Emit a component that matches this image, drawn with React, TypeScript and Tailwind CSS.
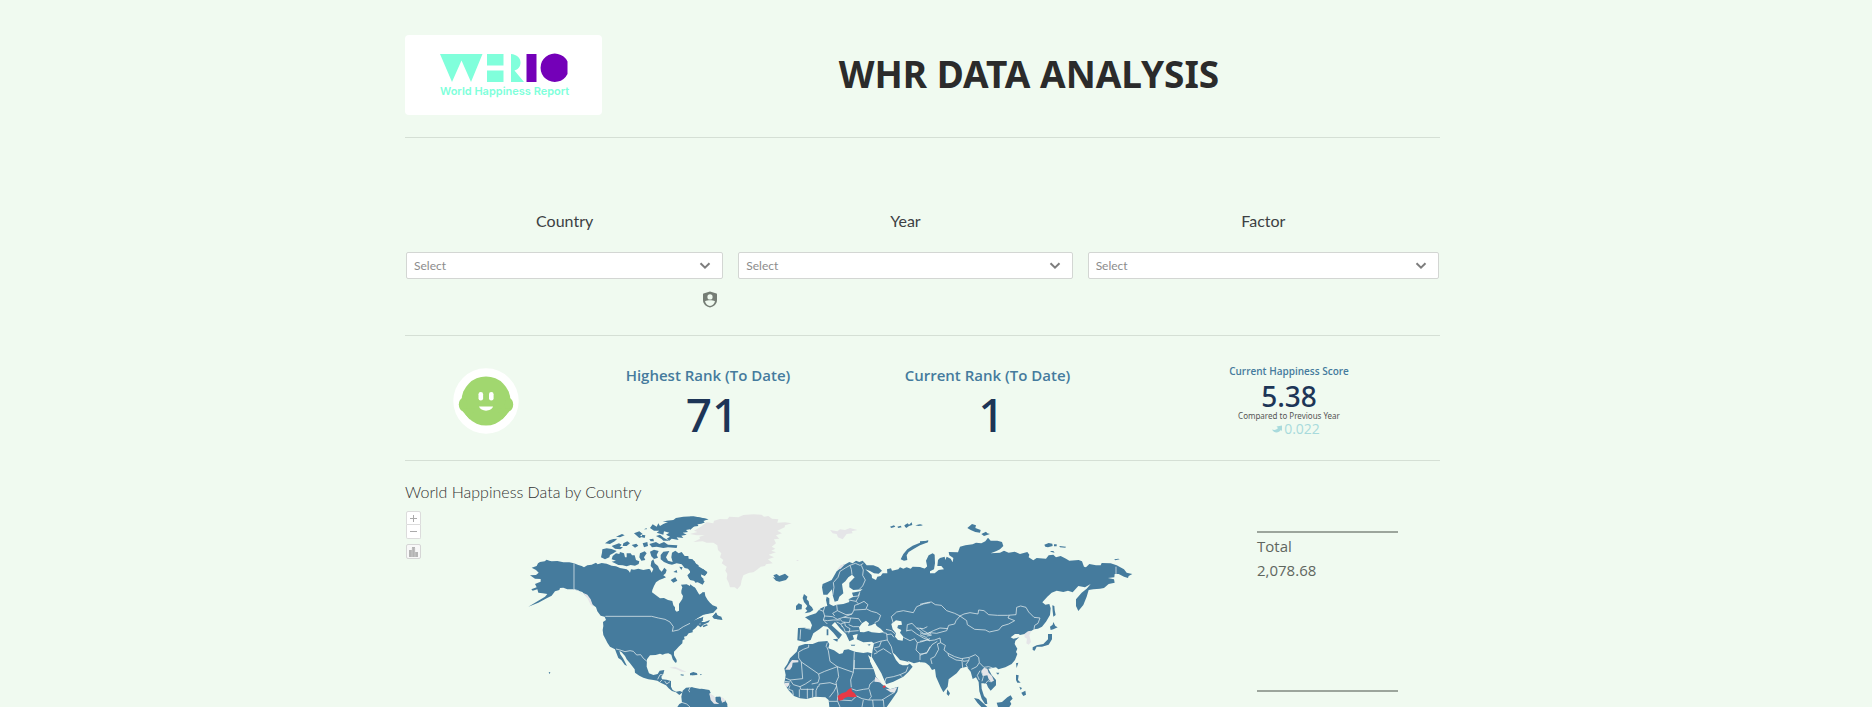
import React from "react";

const NORTH_AMERICA = [
  "M110,179 L118,182 125,184 142,183 160,187 178,187 192,190 205,195 215,198 222,202 232,196 245,194 258,188 263,193 275,189 290,191 305,197 318,199 330,204 350,208 356,212 360,218 363,208 372,209 385,206 400,210 415,207 420,208 425,218 430,207 422,198 424,184 430,178 434,190 444,198 448,208 455,215 463,203 470,210 467,220 460,226 468,232 458,236 448,240 438,247 432,258 427,270 426,277 440,287 450,295 462,294 474,300 487,303 490,316 495,322 495,330 500,335 507,332 507,312 517,297 519,288 514,280 514,272 517,262 513,254 530,253 540,258 545,263 553,262 558,270 560,278 568,284 575,288 576,278 584,276 586,288 593,300 600,308 608,316 620,320 622,325 612,334 600,338 590,341 575,344 565,350 552,362 565,357 580,350 578,360 571,366 584,366 600,360 596,367 580,374 572,382 564,376 556,385 548,391 548,397 536,400 530,408 522,410 524,418 518,420 517,430 506,440 500,447 492,455 492,466 500,480 500,487 496,488 488,478 484,464 475,460 465,461 458,464 450,461 437,465 420,466 411,478 410,500 417,520 430,525 443,522 449,512 463,510 460,522 454,530 456,538 470,539 483,543 483,560 488,570 498,575 510,573 518,577 508,585 498,577 486,573 476,565 468,556 452,548 442,542 430,540 415,538 400,533 388,527 375,518 374,508 360,490 350,478 345,468 335,457 328,452 331,463 340,476 351,498 344,494 334,480 325,474 318,456 315,448 300,440 292,428 288,420 280,405 278,390 280,378 279,366 288,360 284,350 272,347 262,334 258,322 245,312 240,298 228,288 217,276 205,272 190,268 172,268 160,263 150,264 148,270 135,274 125,287 110,295 85,308 55,320 80,305 105,290 112,282 98,280 85,278 82,268 68,272 64,268 80,262 75,252 84,248 92,245 92,237 75,236 60,226 78,225 86,218 78,210 65,203 80,198 84,190 90,186 104,184Z",
  "M277,148 L290,145 305,147 320,153 310,160 300,165 298,172 285,178 273,172 276,158Z",
  "M308,168 L318,160 328,162 330,156 342,160 345,172 350,172 350,160 362,160 366,166 374,166 378,180 388,184 386,192 375,197 362,195 350,199 338,196 325,195 312,188 305,185 318,182 305,178Z",
  "M285,130 L298,121 310,117 322,116 314,124 300,132Z M318,110 l18,-8 8,4 -14,6z M305,138 l22,-8 8,4 -6,6 10,2 -8,6 -16,-2z M340,130 l12,-6 8,6 -10,8 -12,0z M365,135 l14,-4 6,6 -10,6z M372,100 l16,-6 10,8 -8,4 8,4 -10,4z M396,104 l10,2 -2,8 -8,-2z M402,88 l8,-4 0,4z M418,118 l12,-2 2,8 -10,0z M398,130 l14,-4 2,12 -12,4z M390,160 l14,-6 6,6 -8,12 4,8 -12,2 -6,-10z M420,155 l12,-6 14,4 -6,12 4,8 -12,4 -8,-8z",
  "M420,84 L428,73 440,80 445,70 450,78 460,72 474,66 458,66 470,62 490,60 498,54 520,50 550,49 575,53 596,58 580,62 584,68 562,72 565,78 545,80 540,88 528,90 534,96 518,98 530,104 514,107 520,114 500,112 506,120 485,116 478,122 470,116 480,110 468,104 478,98 462,94 460,104 440,98 448,92 432,92Z",
  "M438,108 l12,-4 12,10 16,8 -18,0 -6,-6z M418,132 l20,-6 10,6 14,-6 12,8 28,2 -2,8 -26,-2 -14,2 -20,-4 -14,2z",
  "M452,165 L460,155 478,153 472,164 468,172 474,182 488,186 484,172 486,158 496,152 506,160 515,156 524,168 535,168 536,176 548,178 556,190 566,196 564,206 580,208 592,216 586,226 572,218 574,230 582,238 574,242 578,252 565,246 556,248 550,238 538,238 532,226 542,216 534,206 524,204 515,193 500,190 486,194 476,192 462,186 452,178Z",
  "M482,240 l14,-8 6,10 -12,6z M490,216 l10,-6 2,8z M508,200 l10,2 -4,8z M607,350 L618,338 622,346 634,350 637,360 624,358 612,356Z M578,377 l12,-4 4,3 -14,6z",
  "M540,520 L550,516 562,520 558,525 546,526Z M512,523 l10,1 -2,3 -8,-1z M570,522 l6,1 -4,3z M116,516 l5,1 -2,6z",
  "M518,572 L528,563 545,562 560,568 575,566 598,570 602,578 596,584 598,600 608,614 622,612 616,600 618,590 630,590 633,602 645,600 652,612 652,621 502,621 508,612 516,608 514,590Z",
];

const NORTH_AMERICA_FAINT =
  "M478,503 L495,500 512,508 530,516 515,515 500,508Z M596,580 L612,588 616,606 624,610 616,614 604,610 598,598Z M632,592 l10,4 4,8 -10,0z M218,278 l14,6 10,14 8,22 -8,-6 -10,-20z";

const NORTH_AMERICA_BORDERS =
  "M192,190 V268 L205,272 218,284 M286,349 H425 L445,354 465,358 480,366 490,380 487,394 505,390 520,380 540,370 556,360 568,357 570,374 M318,447 L330,450 345,455 360,452 370,454 380,465 392,464 400,475 411,484 M443,538 L450,524 458,524 M456,540 L448,548 M464,543 L470,552 480,545 M540,562 L536,572 545,582 560,586 562,600 556,612 M560,612 L580,612 590,602 600,598 M515,607 L530,612 540,621";

const GREENLAND =
  "M0,102 L22,96 12,92 30,82 50,67 70,70 72,62 90,57 112,58 118,50 145,52 160,45 190,43 215,44 222,50 235,48 246,56 265,58 262,68 285,67 305,70 285,76 284,82 262,92 276,100 258,106 268,116 252,118 258,130 245,140 256,146 244,152 258,157 236,164 252,172 234,178 248,190 228,193 225,198 212,200 200,210 190,217 178,218 160,226 155,240 152,256 142,268 134,262 120,262 116,248 110,236 112,222 106,212 110,200 95,190 100,180 90,172 94,160 84,150 82,136 70,128 50,128 38,124 10,126 30,116 28,110 44,106 20,106Z";

const WEST = [
  "M248,232 L256,234 250,226 260,222 268,228 285,221 296,230 288,240 268,245 258,242Z",
  "M342,282 L352,290 350,298 356,304 358,314 366,322 370,330 360,337 344,340 352,332 346,326 352,318 342,306 338,294Z M318,330 L318,318 326,310 336,314 335,328Z",
  "M396,262 L398,252 412,246 425,240 432,228 440,214 445,210 455,196 466,193 478,186 488,190 498,182 508,186 518,182 525,190 530,196 550,196 565,202 576,212 566,221 552,220 540,213 526,208 545,225 546,234 558,240 562,230 572,228 578,220 592,220 591,208 603,205 606,212 625,208 630,202 640,206 650,202 662,206 668,200 690,201 704,206 715,196 720,170 720,490 690,485 672,490 652,482 668,500 655,516 640,530 610,545 588,553 574,520 545,470 548,450 552,430 545,425 520,427 500,418 503,402 488,406 492,418 478,424 468,402 450,385 435,366 425,376 456,404 446,418 430,398 412,380 400,378 388,388 370,400 362,420 345,426 322,421 324,384 345,383 362,387 366,376 360,362 345,352 360,346 378,340 390,326 402,320 412,318 408,300 410,290 418,295 418,312 430,318 440,314 460,312 478,306 476,298 490,290 486,278 510,274 518,268 490,270 478,262 478,248 494,232 486,224 475,232 466,244 456,252 460,280 448,290 444,302 434,305 428,286 426,268 412,284 400,284Z",
  "M632,178 L640,162 652,148 668,137 690,128 715,121 714,127 690,136 672,146 656,156 650,166 652,180 642,182Z",
  "M345,432 L368,432 385,425 412,423 418,432 415,445 432,451 448,462 458,460 462,450 475,448 495,455 520,459 533,457 545,460 540,484 552,510 558,530 575,552 590,562 600,568 625,560 622,575 605,600 590,621 418,621 416,600 406,592 375,590 350,597 330,595 312,588 295,570 283,550 287,525 283,505 292,492 300,475 320,455 326,438Z",
  "M600,80 l12,-4 4,4 -12,4z M622,80 l10,-3 3,5 -10,2z M643,76 l10,-6 4,4 8,-7 2,8 -10,3 -8,6 -4,-4z M676,76 l14,-3 8,3 -12,2z M410,388 h5 v18 h-5z M428,418 l16,-2 -2,9z M482,434 l14,0 -2,3 -10,0z M532,434 l10,-2 -4,5z",
  "M0,50 L20,51 54,58 36,64 38,70 18,74 0,90Z M0,176 L14,184 20,196 40,208 52,218 44,228 30,222 32,234 44,244 38,254 18,244 0,240Z M0,253 L16,264 28,284 40,276 46,298 66,318 82,325 70,338 40,344 10,362 30,354 40,360 30,370 14,378 0,394Z M67,350 L78,337 83,347 98,358 82,358Z",
  "M0,520 l16,0 8,5 -24,1z M0,570 L5,562 35,568 58,572 60,588 78,600 76,592 92,590 94,602 108,608 112,621 0,621Z",
];

const WEST_WATER =
  "M510,396 L507,382 516,370 528,362 537,370 534,378 544,376 556,370 560,378 572,386 582,397 568,399 545,397 535,393 522,397Z M604,372 L618,361 634,364 636,374 624,376 622,384 634,390 630,398 640,410 638,422 624,420 615,410 618,400 608,388Z M534,465 L546,474 560,500 572,522 586,548 588,556 580,556 572,542 562,528 552,508 543,488Z M606,456 L616,464 630,480 648,484 662,489 652,496 638,496 628,492 618,480Z M454,376 l4,4 -2,2z";

const WEST_FAINT =
  "M420,90 L442,94 450,88 465,90 480,84 502,90 485,94 488,100 470,102 458,118 444,112 440,102 428,100Z M300,488 L306,480 325,481 325,487 308,488 306,500 300,509 286,509 292,500Z M553,545 L556,530 568,540 576,549 564,546Z M586,566 L600,568 622,562 614,578 602,577Z M282,548 h16 v6 l-6,8 -6,-4z M58,580 L74,590 78,605 88,612 72,611 62,600Z M92,590 L100,594 106,604 96,608Z M440,210 l12,-14 14,-4 -14,14z M320,180 h5 v3 h-5z";

const WEST_BORDERS =
  "M428,286 L432,262 430,248 444,232 450,214 466,204 480,196 484,208 486,224 M480,196 L496,190 510,196 520,190 M514,196 L520,210 518,226 526,240 518,258 508,268 M488,290 L505,288 510,275 M476,300 L498,304 506,290 508,280 M498,304 L506,312 522,304 534,314 528,326 544,334 560,338 572,346 566,362 554,368 M506,312 L494,316 M494,316 L492,330 486,342 468,344 442,332 440,314 M492,330 L528,328 M405,318 L400,334 404,348 400,360 412,372 M400,334 L386,328 M404,348 L428,350 442,358 460,352 486,342 M442,332 L428,340 434,348 M460,352 L482,354 478,368 458,366 450,358 M400,360 L412,362 430,360 450,360 M482,354 L506,356 514,368 M476,374 L490,380 508,380 M464,366 L466,378 480,386 476,400 M452,372 L462,386 466,396 480,394 506,392 M440,366 L452,372 464,368 M332,388 L330,418 M344,384 L362,388 M580,398 L590,400 592,420 570,424 552,430 M588,388 L604,392 616,402 M590,404 L604,402 612,412 M592,420 L604,440 608,458 M574,424 L568,440 552,444 M552,446 L562,456 580,446 604,462 M552,462 L562,458 M584,548 L588,534 610,530 630,524 636,530 M630,524 L648,516 654,500 M610,370 L604,350 620,336 640,332 670,338 680,320 700,312 720,308 M640,412 L660,422 674,416 682,428 678,450 690,462 690,480 M650,394 L652,374 666,370 680,384 700,386 712,380 M650,392 L664,390 680,402 700,414 716,420 M682,428 L700,424 720,416 M690,462 L710,460 720,440 M680,384 L700,400 720,404";

const AFRICA_BORDERS =
  "M326,456 L340,448 356,442 356,434 M326,456 V474 L334,486 386,522 404,514 442,500 420,484 415,452 410,440 M412,428 L408,440 M334,486 L338,536 300,540 286,534 M386,522 L388,534 M442,500 L490,517 493,455 M490,506 H552 M493,480 V506 M442,500 L446,530 438,548 440,560 M490,517 L482,540 484,562 M388,534 L384,548 365,552 M440,555 L420,548 388,552 386,560 M300,540 L310,554 330,560 332,568 M284,544 L300,546 M300,556 L296,568 308,572 310,586 M330,560 L346,552 364,540 M328,568 L328,592 M352,566 V596 M332,568 H372 M368,566 V592 M384,558 L378,572 378,590 M440,558 L432,574 418,592 M440,560 L444,582 442,602 450,621 M484,566 L500,572 520,568 536,566 540,552 554,540 M500,588 L516,596 536,600 544,590 538,568 M536,600 L548,600 550,621 M548,600 L580,600 582,621 M576,600 L600,585 612,578 M500,588 L485,602 450,600 M416,604 L442,604 M520,600 L516,621";

const EAST = [
  "M0,205 L14,206 22,202 18,182 26,166 38,160 44,164 45,190 42,208 30,214 26,220 44,220 56,210 72,208 64,198 52,198 54,180 60,174 74,170 76,180 80,170 92,176 98,187 100,174 88,166 86,156 114,157 120,140 136,136 158,133 168,128 184,130 196,124 204,113 212,122 232,122 246,126 250,138 240,148 228,154 212,160 240,158 252,152 266,158 284,155 300,162 322,156 328,164 326,172 340,181 350,174 378,176 386,166 400,164 408,172 422,168 438,176 448,182 476,180 486,184 492,200 498,202 508,192 528,196 542,196 545,189 572,190 590,196 612,208 620,218 637,222 626,228 624,234 612,230 596,222 584,222 583,232 564,234 582,238 584,248 566,252 552,264 540,266 520,268 506,270 500,290 490,315 475,333 468,318 468,298 485,278 500,266 512,252 495,262 475,258 458,277 444,272 430,276 410,272 395,278 382,290 367,307 376,314 388,312 392,325 390,345 378,365 366,380 354,386 342,388 325,398 314,402 300,405 296,402 285,402 272,412 280,416 298,412 286,422 284,432 292,446 288,456 292,462 285,480 275,492 256,502 235,508 228,502 205,506 215,525 228,540 228,556 212,572 204,562 200,552 190,550 184,550 185,566 192,588 200,596 202,612 195,612 185,596 178,574 176,546 168,532 158,537 152,515 140,500 122,505 110,520 86,538 83,560 70,577 62,562 48,530 45,507 36,510 28,497 15,487 0,487Z",
  "M338,442 L350,436 370,432 384,418 384,402 396,402 396,418 386,434 366,440 350,440 344,452 338,450Z M390,380 L398,374 400,366 406,378 413,382 400,388 392,390Z M397,316 L403,318 404,330 407,345 400,350 398,334Z",
  "M82,568 L90,580 86,588 80,582Z M288,490 L295,488 290,504Z M288,524 L296,526 294,540 302,548 292,548 288,540Z M304,578 L316,572 318,584 310,588 306,582Z M298,560 l8,4 -4,6z M228,518 h10 l-4,6z M162,594 L176,597 190,610 202,621 184,621 172,608Z M230,608 L246,606 262,592 272,586 278,596 270,604 274,612 268,621 234,621Z",
  "M142,84 L156,72 168,76 166,84 182,90 180,98 166,96 152,90Z M184,102 L198,95 202,100 210,102 192,108Z M373,134 L386,129 397,131 398,138 384,142 376,140Z M402,133 h8 v6 h-8z M418,138 l20,2 -2,3 -16,-1z M390,153 l10,0 4,5 -10,-2z M583,178 l12,-2 4,2 -14,3z M0,124 l24,-2 -4,5 -20,4z M0,74 h7 v2 h-7z",
];

const EAST_FAINT =
  "M313,402 L324,394 334,392 328,406 333,426 326,434 319,430 321,416 314,412Z M184,512 L192,503 202,506 206,518 216,528 222,542 214,546 206,538 202,526 190,528Z";

const EAST_BORDERS =
  "M588,200 V222 M0,313 L20,308 34,306 46,314 64,316 80,332 104,340 120,348 132,342 150,338 174,342 176,330 192,332 206,344 232,346 262,346 288,344 290,322 302,318 318,322 326,336 342,352 360,354 354,370 344,376 342,388 M120,348 L140,362 142,374 164,388 196,390 208,396 236,390 246,378 266,372 284,362 264,354 268,346 M120,348 L108,362 104,372 86,376 80,392 50,400 30,398 14,404 0,398 M84,386 L60,384 40,392 24,400 10,392 0,384 M0,404 L18,412 28,422 44,420 60,414 62,428 76,436 72,450 84,460 104,470 124,476 148,472 166,464 176,472 178,488 192,502 M84,460 L86,468 108,480 126,482 M126,476 L130,484 146,482 148,474 M126,482 L128,504 M146,482 L138,494 144,504 M62,428 L52,432 56,448 44,470 32,476 36,492 M0,466 L22,456 36,434 52,424 M178,488 L170,500 154,508 M180,512 L172,526 178,540 M192,502 L206,500 218,504 M184,514 L190,530 186,544 M196,552 L204,542 214,546 M28,396 L34,406 20,408 M0,424 L20,420 30,422";

const BORDER_STROKE = { stroke: "#e3ecee", strokeWidth: 3, strokeOpacity: 0.75, fill: "none" };

function WorldMap() {
  return (
    <svg
      viewBox="0 0 800 199"
      preserveAspectRatio="xMinYMin slice"
      className="block h-[199px] w-full overflow-hidden"
      role="img"
      aria-label="World map of happiness scores by country"
    >
      <g fill="#457b9d">
        <g transform="translate(105 -8) scale(0.33333)">
          {NORTH_AMERICA.map((d) => (
            <path key={d} d={d} />
          ))}
          <path d={NORTH_AMERICA_FAINT} fill="#e5e5e8" />
          <path d={NORTH_AMERICA_BORDERS} {...BORDER_STROKE} />
        </g>
        <g transform="translate(285 -8) scale(0.33333)">
          <path d={GREENLAND} fill="#e5e5e5" />
          {WEST.map((d) => (
            <path key={d} d={d} />
          ))}
        </g>
        <g transform="translate(515 -8) scale(0.33333)">
          {EAST.map((d) => (
            <path key={d} d={d} />
          ))}
          <path d={EAST_FAINT} fill="#e5e5e8" />
          <path d={EAST_BORDERS} {...BORDER_STROKE} />
        </g>
        <g transform="translate(285 -8) scale(0.33333)">
          <path d={WEST_WATER} fill="#f0faf0" />
          <path d={WEST_FAINT} fill="#e5e5e8" />
          <path d={WEST_BORDERS} {...BORDER_STROKE} />
          <path d={AFRICA_BORDERS} {...BORDER_STROKE} />
          <path
            d="M443,588 L455,580 468,576 476,568 484,563 486,574 494,580 501,590 488,592 474,590 464,594 458,600 446,602Z M577,560 l7,-4 4,3 -6,6z"
            fill="#e63946"
          />
        </g>
      </g>
    </svg>
  );
}

function Logo() {
  return (
    <div className="flex h-20 w-[197px] items-center justify-center rounded-sm bg-white pt-0.5">
      <svg viewBox="0 0 128 46" className="h-[46px] w-32 overflow-visible" role="img" aria-label="WHR10 World Happiness Report">
        <g fill="#80ffdb">
          <path d="M0,1 H42.500 L31,29 L21.500,7.500 L12,29Z" />
          <path d="M47,1 H63.500 V12.500 H47Z M47,17.500 H63.500 V29 H47Z" />
          <path d="M71,1 C77,1.500 80.500,5 80.500,9.500 C80.500,14 78,16.500 74.500,17.500 L84,29 H71Z" />
        </g>
        <path d="M86.500,1 H96.500 V29 H86.500Z" fill="#7400b8" />
        <path d="M127.500,8.500 V21 A14.200,14.200 0 1 1 127.500,8.500Z" fill="#7400b8" />
        <text x="0" y="42" fontSize="11" fontWeight="600" fill="#80ffdb" fontFamily="Inter, sans-serif">
          World Happiness Report
        </text>
      </svg>
    </div>
  );
}

function Filter({ id, label }: { id: string; label: string }) {
  return (
    <div className="flex flex-col">
      <label htmlFor={id} className="mb-[19px] text-center text-base leading-6 text-[#3c4043]">
        {label}
      </label>
      <div className="relative">
        <select
          id={id}
          defaultValue=""
          className="block h-[27px] w-full appearance-none rounded-xs border border-[#d3d6d3] bg-white px-[7px] text-xs text-[#8c8c8c]"
        >
          <option value="">Select</option>
        </select>
        <svg viewBox="0 0 12 8" className="pointer-events-none absolute top-2.5 right-3 h-2 w-3" aria-hidden="true">
          <path d="M1.500,1.300 L6,5.700 L10.500,1.300" fill="none" stroke="#7d7d7d" strokeWidth="2" />
        </svg>
      </div>
    </div>
  );
}

function ShieldIcon() {
  return (
    <svg viewBox="0 0 16 17" className="h-[17px] w-4" aria-hidden="true">
      <path
        fillRule="evenodd"
        fill="#757d75"
        d="M8,0.500 L14.500,2.500 Q15,2.700 15,3.500 V9 C15,13 12,15.500 8,16.500 C4,15.500 1,13 1,9 V3.500 Q1,2.700 1.500,2.500Z M8,3.300 A2.600,2.600 0 1 0 8,8.500 A2.600,2.600 0 1 0 8,3.300Z M3,10.300 C3.600,13 5.500,14.500 8,15 C10.500,14.500 12.400,13 13,10.300 C10.500,9 5.500,9 3,10.300Z"
      />
    </svg>
  );
}

function Face() {
  return (
    <svg viewBox="0 0 66 66" className="size-[66px]" role="img" aria-label="Happy face">
      <circle cx="33" cy="33" r="32.700" fill="#fff" />
      <g fill="#a1d76f">
        <circle cx="33" cy="33" r="24.500" />
        <ellipse cx="10" cy="36.500" rx="4.200" ry="6.500" />
        <ellipse cx="56" cy="36.500" rx="4.200" ry="6.500" />
        <path d="M7.500,41 L17,51.500 L22,40Z M58.500,41 L49,51.500 L44,40Z" />
      </g>
      <g fill="#fff">
        <rect x="25.500" y="24" width="4.600" height="8.500" rx="2.200" />
        <rect x="36" y="24" width="4.600" height="8.500" rx="2.200" />
        <path d="M26,38.500 H40 C38.500,44 27.500,44 26,38.500Z" />
      </g>
    </svg>
  );
}

function Rank({ label, value }: { label: string; value: string }) {
  return (
    <div className="flex flex-col items-center">
      <h2 className="text-[15px] leading-5 font-semibold text-[#457b9d]">{label}</h2>
      <p className="pl-2 font-['Noto_Sans',sans-serif] text-[46px] leading-[58px] font-medium text-[#1d3557]">
        {value}
      </p>
    </div>
  );
}

export default function App() {
  return (
    <div className="min-h-screen bg-[#f0faf0] pr-[27px] font-['Open_Sans','Noto_Sans',sans-serif]">
      <main className="mx-auto max-w-[1035px]">
        <header className="flex items-center border-b border-[#d5dfd5] pt-[35px] pb-[22px]">
          <Logo />
          <h1 className="flex-1 pb-0.5 pl-4 text-center font-['Noto_Sans',sans-serif] text-[37px] leading-[48px] font-bold text-[#2b2b2b]">
            WHR DATA ANALYSIS
          </h1>
        </header>

        <section className="border-b border-[#d5dfd5] px-px pt-[71px] pb-[27px] font-[Lato,sans-serif]">
          <div className="grid grid-cols-[317fr_334fr_351fr] gap-x-[15px]">
            <Filter id="country" label="Country" />
            <Filter id="year" label="Year" />
            <Filter id="factor" label="Factor" />
            <button type="button" aria-label="Data credentials" className="mt-3 mr-[5px] justify-self-end">
              <ShieldIcon />
            </button>
          </div>
        </section>

        <section className="grid h-[125px] grid-cols-[174fr_258fr_301fr_302fr] border-b border-[#d5dfd5] pt-[29px]">
          <div className="flex justify-center pt-[3px] pr-3">
            <Face />
          </div>
          <Rank label="Highest Rank (To Date)" value="71" />
          <Rank label="Current Rank (To Date)" value="1" />
          <div className="flex flex-col items-center">
            <h2 className="text-[10px] leading-3 font-semibold text-[#457b9d]">Current Happiness Score</h2>
            <p className="mt-1 font-['Noto_Sans',sans-serif] text-[28px] leading-[30px] font-medium text-[#1d3557]">
              5.38
            </p>
            <p className="font-['Noto_Sans',sans-serif] text-[8px] leading-[10px] text-[#555]">
              Compared to Previous Year
            </p>
            <p className="flex items-center gap-0.5 pl-3.5 text-[14px] leading-4 text-[#a8dadc]">
              <svg viewBox="0 0 10 8" className="h-2 w-2.5" aria-hidden="true">
                <path d="M0,4.500 C3,5.500 5,4.500 6,3 L4.500,1.500 L10,0.500 V6 L8.800,5 C7,8 2,8.500 0,4.500Z" fill="#a8dadc" />
              </svg>
              0.022
            </p>
          </div>
        </section>

        <section className="pt-[15px]">
          <h2 className="font-[Lato,sans-serif] text-base leading-8 font-light text-[#333]">
            World Happiness Data by Country
          </h2>
          <div className="flex">
            <div className="relative min-w-0 flex-1">
              <WorldMap />
              <div className="absolute top-[3px] left-px flex flex-col">
                <button
                  type="button"
                  aria-label="Zoom in"
                  className="flex h-3.5 w-[15px] items-center justify-center rounded-t-xs border border-[#dcdcdc] bg-white"
                >
                  <svg viewBox="0 0 7 7" className="size-[7px]" aria-hidden="true">
                    <path d="M0,3.500 H7 M3.500,0 V7" stroke="#aaa" />
                  </svg>
                </button>
                <button
                  type="button"
                  aria-label="Zoom out"
                  className="flex h-3.5 w-[15px] items-center justify-center rounded-b-xs border border-t-0 border-[#dcdcdc] bg-white"
                >
                  <svg viewBox="0 0 7 7" className="size-[7px]" aria-hidden="true">
                    <path d="M0,3.500 H7" stroke="#aaa" />
                  </svg>
                </button>
                <button
                  type="button"
                  aria-label="Show legend"
                  className="mt-[5px] flex h-[15px] w-[15px] items-center justify-center rounded-xs border border-[#d6d6d6] bg-[#f8f8f8]"
                >
                  <svg viewBox="0 0 9 10" className="h-2.5 w-[9px]" aria-hidden="true">
                    <path d="M0,3 H3 V10 H0Z M3,0 H6 V10 H3Z M6,5 H9 V10 H6Z" fill="#b4b4b4" />
                    <path d="M3,1 V10 M6,1 V10" stroke="#ddd" strokeWidth="0.500" />
                  </svg>
                </button>
              </div>
            </div>
            <div className="mr-[42px] ml-[52px] w-[141px] pt-[23px]">
              <dl className="h-[161px] border-y-2 border-[#9ca59c] pt-px text-[15px] leading-6 text-[#5f665f]">
                <dt>Total</dt>
                <dd>2,078.68</dd>
              </dl>
            </div>
          </div>
        </section>
      </main>
    </div>
  );
}
